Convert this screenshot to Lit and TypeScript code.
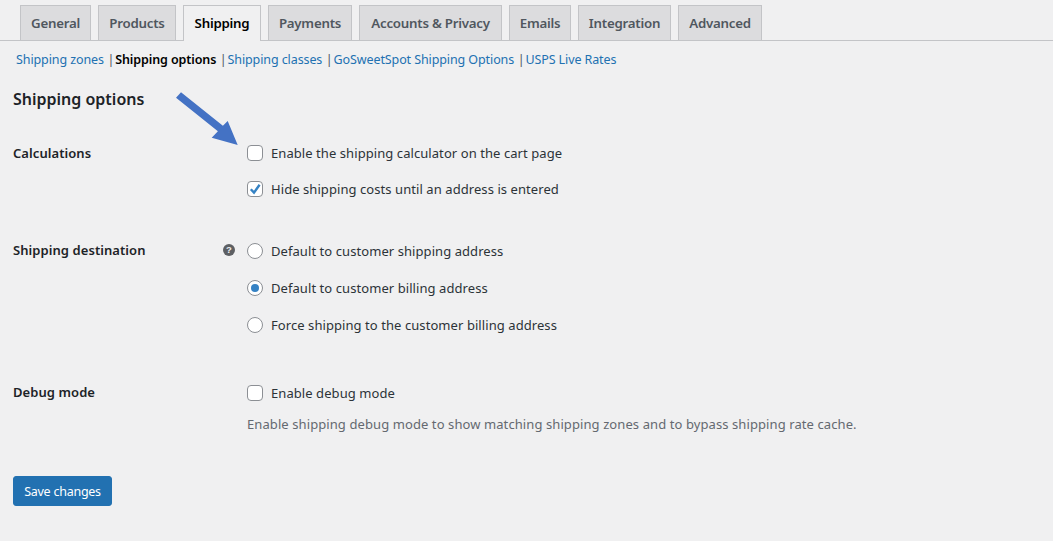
import { LitElement, html, css } from "lit";
import { customElement } from "lit/decorators.js";

const tabs = [
  { label: "General", width: 71 },
  { label: "Products", width: 78 },
  { label: "Shipping", width: 78 },
  { label: "Payments", width: 84 },
  { label: "Accounts & Privacy", width: 143 },
  { label: "Emails", width: 62 },
  { label: "Integration", width: 93 },
  { label: "Advanced", width: 84 },
];
const subs = ["Shipping zones", "Shipping options", "Shipping classes", "GoSweetSpot Shipping Options", "USPS Live Rates"];

@customElement("app-root")
export class AppRoot extends LitElement {
  static styles = css`
    :host {
      display: block;
      position: relative;
      height: 541px;
      overflow: hidden;
      background: #f0f0f1;
      color: #3c434a;
      font-family: "Noto Sans", "Open Sans", sans-serif;
      font-size: 13px;
      letter-spacing: 0.07px;
    }
    .tabs {
      display: flex;
      gap: 7px;
      padding: 5px 0 0 20px;
      height: 35px;
      border-bottom: 1px solid #c3c4c7;
      margin: 0;
    }
    .tab {
      box-sizing: border-box;
      height: 35px;
      line-height: 34px;
      text-align: center;
      border: 1px solid #c3c4c7;
      border-bottom: none;
      background: #dcdcde;
      color: #50575e;
      font-size: 13.3px;
      letter-spacing: -0.25px;
      font-weight: 600;
      white-space: nowrap;
    }
    .tab.active {
      background: #f0f0f1;
      color: #000;
      height: 36px;
    }
    .subs {
      display: flex;
      padding: 10px 0 0 16px;
      height: 18px;
      line-height: 18px;
      white-space: nowrap;
      font-size: 12.5px;
      letter-spacing: -0.1px;
    }
    .subs a { color: #2271b1; }
    .subs a.cur { color: #000; font-weight: 600; }
    .sep { color: #50575e; margin: 0 1px 0 3.5px; }
    h2 {
      margin: 18px 0 0 13px;
      height: 24px;
      line-height: 24px;
      font-size: 16px;
      letter-spacing: 0;
      font-weight: 600;
      color: #1d2327;
    }
    .row {
      display: grid;
      grid-template-columns: 234px 1fr;
      padding-left: 13px;
    }
    .row1 { margin-top: 32px; }
    .row2 { margin-top: 41px; }
    .row3 { margin-top: 47px; }
    .lab {
      font-weight: 600;
      color: #1d2327;
      line-height: 20px;
      position: relative;
    }
    .help {
      position: absolute;
      left: 210px;
      top: 4px;
      width: 12px;
      height: 12px;
    }
    .opts { display: flex; flex-direction: column; padding-top: 1px; }
    .row1 .opts { padding-top: 0; }
    .opt {
      display: flex;
      align-items: center;
      gap: 8px;
      height: 20px;
      line-height: 20px;
      color: #2c3338;
    }
    .row1 .opt + .opt { margin-top: 16px; }
    .row2 .opt + .opt { margin-top: 17px; }
    .box {
      width: 14px;
      height: 14px;
      border: 1px solid #8c8f94;
      border-radius: 4px;
      background: #fff;
      display: block;
      flex: none;
    }
    .radio {
      width: 14px;
      height: 14px;
      border: 1px solid #8c8f94;
      border-radius: 50%;
      background: #fff;
      display: flex;
      align-items: center;
      justify-content: center;
      flex: none;
    }
    .radio i {
      width: 8px;
      height: 8px;
      border-radius: 50%;
      background: #3582c4;
      display: block;
    }
    .box svg { display: block; width: 14px; height: 14px; }
    .desc { margin-top: 11px; line-height: 20px; color: #646970; letter-spacing: 0.09px; }
    .save {
      display: block;
      margin: 42px 0 0 13px;
      width: 99px;
      height: 30px;
      border: 1px solid #2271b1;
      border-radius: 3px;
      background: #2271b1;
      color: #fff;
      font: inherit;
      font-size: 12.5px;
      letter-spacing: -0.25px;
      padding: 0;
    }
    .arrow {
      position: absolute;
      left: 170px;
      top: 85px;
      width: 75px;
      height: 65px;
    }
  `;

  render() {
    return html`
      <nav class="tabs">
        ${tabs.map(
          (t) => html`<span class="tab ${t.label === "Shipping" ? "active" : ""}" style="width:${t.width}px">${t.label}</span>`
        )}
      </nav>
      <div class="subs">
        ${subs.map(
          (s, i) => html`${i ? html`<span class="sep">|</span>` : ""}<a class=${s === "Shipping options" ? "cur" : ""}>${s}</a>`
        )}
      </div>
      <h2>Shipping options</h2>
      <div class="row row1">
        <div class="lab">Calculations</div>
        <div class="opts">
          <label class="opt"><span class="box"></span>Enable the shipping calculator on the cart page</label>
          <label class="opt"><span class="box"><svg viewBox="0 0 14 14"><path d="M2.8 7.2 L6 10.6 L11.6 2.8" fill="none" stroke="#3582c4" stroke-width="2.4"/></svg></span>Hide shipping costs until an address is entered</label>
        </div>
      </div>
      <div class="row row2">
        <div class="lab">Shipping destination
          <svg class="help" viewBox="0 0 12 12"><circle cx="6" cy="6" r="6" fill="#5d5f63"/><text x="6" y="9.4" text-anchor="middle" font-size="9.5" font-weight="700" fill="#f0f0f1" font-family="Liberation Sans">?</text></svg>
        </div>
        <div class="opts">
          <label class="opt"><span class="radio"></span>Default to customer shipping address</label>
          <label class="opt"><span class="radio"><i></i></span>Default to customer billing address</label>
          <label class="opt"><span class="radio"></span>Force shipping to the customer billing address</label>
        </div>
      </div>
      <div class="row row3">
        <div class="lab">Debug mode</div>
        <div class="opts">
          <label class="opt"><span class="box"></span>Enable debug mode</label>
          <div class="desc">Enable shipping debug mode to show matching shipping zones and to bypass shipping rate cache.</div>
        </div>
      </div>
      <button class="save">Save changes</button>
      <svg class="arrow" viewBox="170 85 75 65">
        <polygon fill="#4472c4" points="176,97.7 181,92.3 222.9,125.8 227.7,121 237.7,145 211.7,137.7 217.9,131.2"/>
      </svg>
    `;
  }
}
